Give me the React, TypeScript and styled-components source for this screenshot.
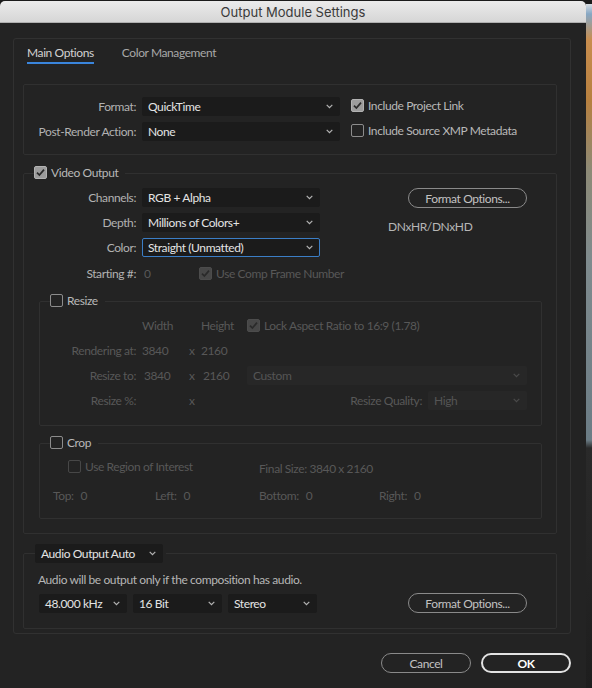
import styled, { createGlobalStyle } from "styled-components";

const GlobalStyle = createGlobalStyle`
  html, body {
    margin: 0;
    padding: 0;
    background: #1b1b1b;
  }
  body {
    font-family: Lato, "Liberation Sans", sans-serif;
    font-size: 12px;
    letter-spacing: -0.4px;
  }
  * { box-sizing: border-box; }
`;

const Screen = styled.div`
  display: flex;
  width: 592px;
  height: 688px;
  overflow: hidden;
`;

const Dialog = styled.div`
  width: 586px;
  margin-top: 1px;
  display: flex;
  flex-direction: column;
  background: #232323;
  border-radius: 5px 5px 0 0;
`;

/* strip of the desktop behind the dialog */
const Backdrop = styled.div`
  flex: 1;
  background: linear-gradient(
    to bottom,
    #1b1b1b 0,
    #1b1b1b 4px,
    #d8dde2 4px,
    #86a7c4 14px,
    #c88d4e 40px,
    #b7803f 100px,
    #8d8a76 170px,
    #7f8b8e 260px,
    #6b7c85 440px,
    #2a2a2a 448px,
    #1e1e1e 688px
  );
`;

const TitleBar = styled.div`
  height: 22px;
  display: flex;
  align-items: center;
  justify-content: center;
  background: linear-gradient(#ebebeb, #d6d6d6);
  border-bottom: 1px solid #b0b0b0;
  border-radius: 5px 5px 0 0;
  font-family: Inter, "Liberation Sans", sans-serif;
  font-size: 13px;
  letter-spacing: 0;
  color: #3a3a3a;
`;

const Body = styled.div`
  padding: 15px 15px 0 13px;
`;

const TabPanel = styled.div`
  border: 1px solid #313131;
  border-radius: 3px;
  padding: 0 13px 4px 9px;
`;

const TabBar = styled.div`
  display: flex;
  gap: 28px;
  padding: 6px 0 0 4px;
  margin-bottom: 20px;
`;

const Tab = styled.div<{ $active?: boolean }>`
  line-height: 16px;
  padding-bottom: 1px;
  border-bottom: 2px solid ${(p) => (p.$active ? "#3a85dc" : "transparent")};
  color: ${(p) => (p.$active ? "#d2d2d2" : "#a8a8a8")};
`;

const Section = styled.div`
  border: 1px solid #303030;
  border-radius: 2px;
  padding: 12px 0 13px;
  display: grid;
  grid-template-columns: 118px 198px 1fr;
  grid-auto-rows: 19px;
  row-gap: 6px;
  align-items: center;
`;

const Label = styled.span<{ $off?: boolean }>`
  text-align: right;
  padding-right: 6px;
  white-space: nowrap;
  color: ${(p) => (p.$off ? "#585858" : "#b2b2b2")};
`;

const Dim = styled.span<{ $indent?: number }>`
  color: #585858;
  white-space: nowrap;
  padding-left: ${(p) => p.$indent ?? 0}px;
`;

const Text = styled.span`
  color: #b6b6b6;
  white-space: nowrap;
  line-height: 16px;
`;

const Group = styled.fieldset<{ $gap: number }>`
  margin: ${(p) => p.$gap}px 0 0;
  padding: 0;
  min-width: 0;
  border: 1px solid #303030;
  border-radius: 2px;
`;

const Legend = styled.legend<{ $inset: number; $trail?: number }>`
  margin-left: ${(p) => p.$inset}px;
  padding: 0 ${(p) => p.$trail ?? 7}px 0 0;
  line-height: 13px;
`;

const GroupBody = styled.div<{ $pad: string }>`
  padding: ${(p) => p.$pad};
`;

const SelectBox = styled.div<{ $w?: number; $focus?: boolean; $off?: boolean }>`
  width: ${(p) => (p.$w ? `${p.$w}px` : "100%")};
  height: 19px;
  display: flex;
  align-items: center;
  justify-content: space-between;
  padding: 0 6px 0 5px;
  background: ${(p) => (p.$off ? "#272727" : "#1b1b1b")};
  border: 1px solid ${(p) => (p.$focus ? "#3b7ec6" : "transparent")};
  border-radius: 2px;
  color: ${(p) => (p.$off ? "#555555" : "#e4e4e4")};
  white-space: nowrap;
`;

const Box = styled.span<{ $on?: boolean; $off?: boolean }>`
  flex: none;
  width: 13px;
  height: 13px;
  display: inline-flex;
  align-items: center;
  justify-content: center;
  border-radius: 2px;
  border: ${(p) =>
    p.$on
      ? `1px solid ${p.$off ? "#4c4c4c" : "#b2b2b2"}`
      : `1.5px solid ${p.$off ? "#474747" : "#8c8c8c"}`};
  background: ${(p) => (p.$on ? (p.$off ? "#474747" : "#9c9c9c") : "transparent")};
`;

const CheckRow = styled.span<{ $off?: boolean }>`
  display: inline-flex;
  align-items: center;
  gap: 4px;
  height: 13px;
  line-height: 13px;
  white-space: nowrap;
  color: ${(p) => (p.$off ? "#585858" : "#b8b8b8")};
`;

const PillButton = styled.button<{ $primary?: boolean; $w: number }>`
  width: ${(p) => p.$w}px;
  height: 20px;
  padding: 0;
  background: transparent;
  border: ${(p) => (p.$primary ? "2px solid #e2e2e2" : "1.5px solid #8a8a8a")};
  border-radius: 10px;
  font-family: Lato, "Liberation Sans", sans-serif;
  font-size: 12px;
  letter-spacing: -0.4px;
  font-weight: ${(p) => (p.$primary ? 700 : 400)};
  color: ${(p) => (p.$primary ? "#ffffff" : "#c2c2c2")};
`;

const TopBlock = styled.div`
  display: flex;
  align-items: flex-start;
`;

const FieldGrid = styled.div`
  display: grid;
  grid-template-columns: 103px 178px;
  grid-auto-rows: 19px;
  row-gap: 6px;
  align-items: center;
`;

const SideColumn = styled.div`
  margin-left: 68px;
  width: 139px;
  display: flex;
  flex-direction: column;
  align-items: flex-end;
  gap: 11px;
  & > ${Text} {
    align-self: flex-start;
  }
`;

const StartRow = styled.div`
  display: grid;
  grid-template-columns: 103px 57px 1fr;
  align-items: center;
  height: 16px;
  margin-top: 8px;
`;

const ResizeGrid = styled.div`
  display: grid;
  grid-template-columns: 102px 47px 12px 46px 1fr;
  grid-auto-rows: 19px;
  row-gap: 6px;
  align-items: center;
`;

const QualityCell = styled.div`
  display: flex;
  justify-content: flex-end;
  align-items: center;
  gap: 6px;
`;

const CropGrid = styled.div`
  display: grid;
  grid-template-columns: 102px 104px 120px 1fr;
  grid-auto-rows: 16px;
  row-gap: 11px;
  align-items: center;
`;

const Span = styled.div<{ $from: number; $to: number; $indent?: number }>`
  grid-column: ${(p) => p.$from} / ${(p) => p.$to};
  padding-left: ${(p) => p.$indent ?? 0}px;
`;

const Pair = styled.span`
  display: inline-flex;
  gap: 7px;
  color: #585858;
  white-space: nowrap;
`;

const AudioRow = styled.div`
  display: flex;
  align-items: center;
  gap: 6px;
  margin: 5px 0 0 1px;
  & > button {
    margin-left: auto;
  }
`;

const Footer = styled.div`
  display: flex;
  justify-content: flex-end;
  gap: 10px;
  margin-top: 19px;
`;

function Chevron({ off }: { off?: boolean }) {
  return (
    <svg width="7" height="5" viewBox="0 0 7 5" style={{ flex: "none" }}>
      <polyline
        points="0.7,0.9 3.5,3.7 6.3,0.9"
        fill="none"
        stroke={off ? "#4a4a4a" : "#b4b4b4"}
        strokeWidth="1.2"
      />
    </svg>
  );
}

function Dropdown(props: { value: string; w?: number; focus?: boolean; off?: boolean }) {
  return (
    <SelectBox $w={props.w} $focus={props.focus} $off={props.off}>
      <span>{props.value}</span>
      <Chevron off={props.off} />
    </SelectBox>
  );
}

function Check({ on, off }: { on?: boolean; off?: boolean }) {
  return (
    <Box $on={on} $off={off}>
      {on && (
        <svg width="11" height="11" viewBox="0 0 11 11">
          <path d="M2 5.6 L4.4 8 L9 2.6" fill="none" stroke="#2a2a2a" strokeWidth="1.7" />
        </svg>
      )}
    </Box>
  );
}

function CheckLabel(props: { label: string; on?: boolean; off?: boolean }) {
  return (
    <CheckRow $off={props.off}>
      <Check on={props.on} off={props.off} />
      {props.label}
    </CheckRow>
  );
}

export default function App() {
  return (
    <Screen>
      <GlobalStyle />
      <Dialog>
        <TitleBar>Output Module Settings</TitleBar>
        <Body>
          <TabPanel>
            <TabBar>
              <Tab $active>Main Options</Tab>
              <Tab>Color Management</Tab>
            </TabBar>

            <Section>
              <Label>Format:</Label>
              <Dropdown value="QuickTime" />
              <Span $from={3} $to={4} $indent={11}>
                <CheckLabel label="Include Project Link" on />
              </Span>
              <Label>Post-Render Action:</Label>
              <Dropdown value="None" />
              <Span $from={3} $to={4} $indent={11}>
                <CheckLabel label="Include Source XMP Metadata" />
              </Span>
            </Section>

            <Group $gap={11}>
              <Legend $inset={10}>
                <CheckLabel label="Video Output" on />
              </Legend>
              <GroupBody $pad="8px 14px 14px 15px">
                <TopBlock>
                  <FieldGrid>
                    <Label>Channels:</Label>
                    <Dropdown value="RGB + Alpha" />
                    <Label>Depth:</Label>
                    <Dropdown value="Millions of Colors+" />
                    <Label>Color:</Label>
                    <Dropdown value="Straight (Unmatted)" focus />
                  </FieldGrid>
                  <SideColumn>
                    <PillButton $w={119}>Format Options...</PillButton>
                    <Text>DNxHR/DNxHD</Text>
                  </SideColumn>
                </TopBlock>

                <StartRow>
                  <Label>Starting #:</Label>
                  <Dim $indent={2}>0</Dim>
                  <CheckLabel label="Use Comp Frame Number" on off />
                </StartRow>

                <Group $gap={13}>
                  <Legend $inset={10}>
                    <CheckLabel label="Resize" />
                  </Legend>
                  <GroupBody $pad="7px 14px 15px 0">
                    <ResizeGrid>
                      <span />
                      <Dim>Width</Dim>
                      <span />
                      <Dim>Height</Dim>
                      <CheckLabel label="Lock Aspect Ratio to 16:9 (1.78)" on off />

                      <Label $off>Rendering at:</Label>
                      <Dim>3840</Dim>
                      <Dim>x</Dim>
                      <Dim>2160</Dim>
                      <span />

                      <Label $off>Resize to:</Label>
                      <Dim $indent={2}>3840</Dim>
                      <Dim>x</Dim>
                      <Dim $indent={2}>2160</Dim>
                      <Dropdown value="Custom" off />

                      <Label $off>Resize %:</Label>
                      <span />
                      <Dim>x</Dim>
                      <span />
                      <QualityCell>
                        <Dim>Resize Quality:</Dim>
                        <Dropdown value="High" w={99} off />
                      </QualityCell>
                    </ResizeGrid>
                  </GroupBody>
                </Group>

                <Group $gap={10}>
                  <Legend $inset={10}>
                    <CheckLabel label="Crop" />
                  </Legend>
                  <GroupBody $pad="9px 0 15px 13px">
                    <CropGrid>
                      <Span $from={1} $to={3} $indent={15}>
                        <CheckLabel label="Use Region of Interest" off />
                      </Span>
                      <Span $from={3} $to={5}>
                        <Dim>Final Size: 3840 x 2160</Dim>
                      </Span>
                      <Pair>Top:<span>0</span></Pair>
                      <Pair>Left:<span>0</span></Pair>
                      <Pair>Bottom:<span>0</span></Pair>
                      <Pair>Right:<span>0</span></Pair>
                    </CropGrid>
                  </GroupBody>
                </Group>
              </GroupBody>
            </Group>

            <Group $gap={10}>
              <Legend $inset={11} $trail={3}>
                <Dropdown value="Audio Output Auto" w={128} />
              </Legend>
              <GroupBody $pad="9px 29px 15px 14px">
                <Text>Audio will be output only if the composition has audio.</Text>
                <AudioRow>
                  <Dropdown value="48.000 kHz" w={88} />
                  <Dropdown value="16 Bit" w={89} />
                  <Dropdown value="Stereo" w={89} />
                  <PillButton $w={119}>Format Options...</PillButton>
                </AudioRow>
              </GroupBody>
            </Group>
          </TabPanel>

          <Footer>
            <PillButton $w={90}>Cancel</PillButton>
            <PillButton $w={90} $primary>
              OK
            </PillButton>
          </Footer>
        </Body>
      </Dialog>
      <Backdrop />
    </Screen>
  );
}
